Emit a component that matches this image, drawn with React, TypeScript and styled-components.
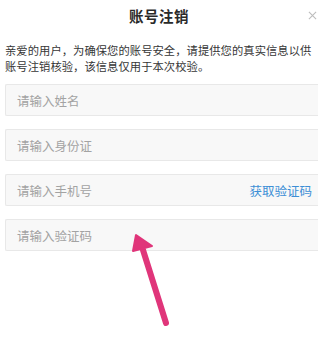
import React from "react"
import styled, { createGlobalStyle } from "styled-components"

const GlobalStyle = createGlobalStyle`
  html, body {
    margin: 0;
    padding: 0;
    background: #ffffff;
  }
  body {
    font-family: "Noto Sans CJK SC", "Noto Sans", sans-serif;
    overflow: hidden;
  }
`

const Page = styled.div`
  position: relative;
  width: 318px;
  height: 337px;
  background: #fff;
  overflow: hidden;
`

const Header = styled.div`
  position: relative;
  height: 30px;
  display: flex;
  align-items: center;
  justify-content: center;
`

const Title = styled.div`
  font-size: 14.5px;
  font-weight: 700;
  color: #2a2a2a;
  letter-spacing: 0.5px;
`

const Close = styled.div`
  position: absolute;
  right: -1px;
  top: 8px;
  width: 14px;
  height: 14px;
  display: flex;
  align-items: center;
  justify-content: center;
`

const Notice = styled.p`
  margin: 12px 0 0;
  padding: 0 4px 0 5px;
  font-size: 11.3px;
  line-height: 16px;
  color: #363636;
  letter-spacing: 0.05px;
`

const Form = styled.div`
  display: flex;
  flex-direction: column;
  gap: 13px;
  margin-top: 10px;
  padding-left: 5px;
`

const Field = styled.div`
  height: 30px;
  display: flex;
  align-items: center;
  justify-content: space-between;
  padding: 0 6px 0 11px;
  background: #f8f8f8;
  border: 1px solid #e8e8e8;
  border-right: none;
  border-radius: 2px 0 0 2px;
`

const Placeholder = styled.span`
  font-size: 12.5px;
  color: #a3a3a3;
`

const Action = styled.span`
  font-size: 12.5px;
  color: #3d8fd6;
`

const Arrow = styled.svg`
  position: absolute;
  left: 128px;
  top: 230px;
`

const fields = ["请输入姓名", "请输入身份证", "请输入手机号", "请输入验证码"]

const App = () => {
  return (
    <Page>
      <GlobalStyle />
      <Header>
        <Title>账号注销</Title>
        <Close>
          <svg width="9" height="9" viewBox="0 0 10 10">
            <path d="M1 1 L9 9 M9 1 L1 9" stroke="#bdbdbd" strokeWidth="1.2" />
          </svg>
        </Close>
      </Header>
      <Notice>
        亲爱的用户，为确保您的账号安全，请提供您的真实信息以供账号注销核验，该信息仅用于本次校验。
      </Notice>
      <Form>
        {fields.map((f, i) => (
          <Field key={f}>
            <Placeholder>{f}</Placeholder>
            {i === 2 && <Action>获取验证码</Action>}
          </Field>
        ))}
      </Form>
      <Arrow width="50" height="100" viewBox="0 0 50 100">
        <path d="M15 20 L38 93" stroke="#e0357a" strokeWidth="6" strokeLinecap="round" />
        <polygon points="8,5 5,21 24,16" fill="#e0357a" stroke="#e0357a" strokeWidth="2" strokeLinejoin="round" />
      </Arrow>
    </Page>
  )
}

export default App
